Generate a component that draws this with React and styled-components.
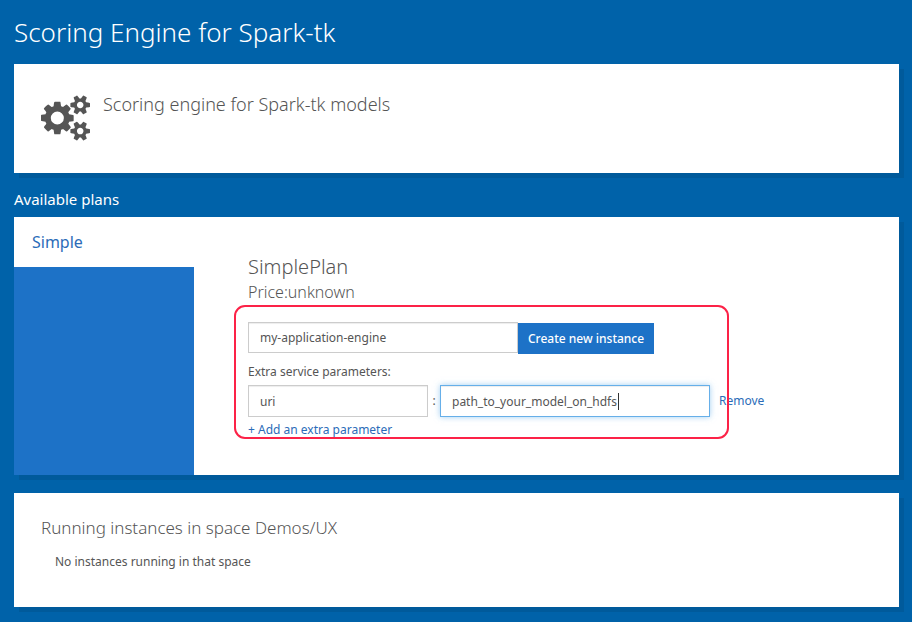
import React, { useState } from 'react';
import styled, { createGlobalStyle } from 'styled-components';

const GlobalStyle = createGlobalStyle`
  *, *::before, *::after { box-sizing: border-box; }
  body {
    margin: 0;
    background: #0062a9;
    color: #555;
    font: 12px/20px "Noto Sans", "Open Sans", sans-serif;
  }
`;

const Page = styled.main`
  padding: 12px 13px 15px 14px;
`;

const PageTitle = styled.h1`
  margin: 0 0 12px;
  color: #fff;
  font-size: 26px;
  font-weight: 300;
  line-height: 40px;
`;

const SectionTitle = styled.h2`
  margin: 16px 0 7px;
  color: #fff;
  font-size: 15px;
  font-weight: 400;
  line-height: 21px;
`;

const Panel = styled.section`
  background: #fff;
  box-shadow: 5px 5px 0 rgba(0, 0, 0, 0.08);
`;

const Summary = styled(Panel)`
  display: flex;
  align-items: flex-start;
  gap: 13px;
  min-height: 109px;
  padding: 28px 27px;
`;

const SummaryText = styled.p`
  margin: 0;
  font-size: 18px;
  font-weight: 300;
  line-height: 24px;
`;

const GearsIcon = styled.svg`
  width: 49px;
  height: 46px;
  margin-top: 3px;
  fill: #555;
`;

const Plans = styled(Panel)`
  display: grid;
  grid-template-columns: 180px 1fr;
  min-height: 258px;
`;

const PlanTabs = styled.nav`
  background: #1d72c7;
`;

const PlanTab = styled.a`
  display: block;
  padding: 14px 18px;
  background: #fff;
  color: #2b6cb8;
  font-size: 16px;
  line-height: 22px;
  text-decoration: none;
`;

const PlanDetails = styled.div`
  padding: 37px 54px 34px;
`;

const PlanName = styled.h3`
  margin: 0;
  font-size: 20px;
  font-weight: 300;
  line-height: 26px;
`;

const PlanPrice = styled.p`
  margin: 1px 0 19px;
  font-size: 16px;
  font-weight: 300;
  line-height: 22px;
`;

const InstanceForm = styled.form`
  position: relative;
`;

const Highlight = styled.span`
  position: absolute;
  top: -17px;
  left: -14px;
  width: 495px;
  height: 134px;
  border: 2px solid #fc2247;
  border-radius: 11px;
  pointer-events: none;
`;

const NameRow = styled.div`
  display: flex;
  align-items: flex-start;
`;

const TextField = styled.input`
  display: block;
  width: ${({ $wide }) => ($wide ? '270px' : '180px')};
  height: ${({ $tall }) => ($tall ? '32px' : '31px')};
  padding: 0 11px;
  border: 1px solid ${({ $active }) => ($active ? '#66afe9' : '#ccc')};
  border-radius: 0;
  outline: none;
  background: #fff;
  box-shadow: inset 0 1px 1px rgba(0, 0, 0, 0.075)
    ${({ $active }) => $active && ', 0 0 6px rgba(102, 175, 233, 0.6)'};
  color: #555;
  font: inherit;
`;

const CreateButton = styled.button`
  height: 31px;
  margin-top: 1px;
  padding: 0 10px;
  border: 0;
  background: #1d72c7;
  color: #fff;
  font: inherit;
  font-weight: 500;
`;

const ParamsLabel = styled.p`
  margin: 8px 0 3px;
`;

const ParamRow = styled.div`
  display: flex;
  align-items: center;
`;

const Separator = styled.span`
  width: 12px;
  text-align: center;
`;

const ValueBox = styled.div`
  position: relative;
  margin-right: 9px;
`;

const Caret = styled.span`
  position: absolute;
  top: 8px;
  left: 178px;
  width: 1px;
  height: 17px;
  background: #333;
`;

const ActionLink = styled.a`
  color: #2b6cb8;
  text-decoration: none;
`;

const AddRow = styled.div`
  margin-top: 3px;
`;

const Instances = styled(Panel)`
  min-height: 114px;
  margin-top: 18px;
  padding: 23px 27px;
`;

const InstancesTitle = styled.h2`
  margin: 0 0 12px;
  font-size: 17px;
  font-weight: 300;
  line-height: 24px;
`;

const EmptyMessage = styled.p`
  margin: 0;
  padding-left: 14px;
`;

const bigGear =
  'M896 896q0-106-75-181t-181-75-181 75-75 181 75 181 181 75 181-75 75-181zm384-91v185q0 10-7 19.5t-16 10.5l-155 24q-11 35-32 76 34 48 90 115 7 11 7 20 0 12-7 19-23 30-82.5 89.5t-78.5 59.5q-11 0-21-7l-115-90q-37 19-77 31-11 108-23 155-7 24-30 24h-186q-11 0-20-7.5t-10-17.5l-23-153q-34-10-75-31l-118 89q-7 7-20 7-11 0-21-8-144-133-144-160 0-9 7-19 10-14 41-53t47-61q-23-44-35-82l-152-24q-10-1-17-9.5t-7-19.5v-185q0-10 7-19.5t16-10.5l155-24q11-35 32-76-34-48-90-115-7-11-7-20 0-12 7-20 22-30 82-89t79-59q11 0 21 7l115 90q34-18 77-32 11-108 23-154 7-24 30-24h186q11 0 20 7.5t10 17.5l23 153q34 10 75 31l118-89q8-7 20-7 11 0 21 8 144 133 144 160 0 8-7 19-12 16-42 54t-45 60q23 48 34 82l152 23q10 2 17 10.5t7 19.5z';
const smallGear =
  'M1664 384q0-52-38-90t-90-38-90 38-38 90q0 53 37.5 90.5t90.5 37.5 90.5-37.5 37.5-90.5zm256-70v140q0 16-149 31-12 27-30 52 51 113 51 138 0 4-4 7-122 71-124 71-8 0-46-47t-52-68q-20 2-30 2t-30-2q-14 21-52 68t-46 47q-2 0-124-71-4-3-4-7 0-25 51-138-18-25-30-52-149-15-149-31v-140q0-16 149-31 13-29 30-52-51-113-51-138 0-4 4-7 4-2 35-20t59-34 30-16q8 0 46 46.5t52 67.5q20-2 30-2t30 2q51-71 92-112l6-2q4 0 124 70 4 3 4 7 0 25-51 138 17 23 30 52 149 15 149 31z';

function Gears() {
  return (
    <GearsIcon viewBox="0 0 1920 1792" aria-hidden="true">
      <path fillRule="evenodd" d={bigGear} />
      <path fillRule="evenodd" d={smallGear} />
      <path fillRule="evenodd" d={smallGear} transform="translate(0 1024)" />
    </GearsIcon>
  );
}

export default function App() {
  const [name, setName] = useState('my-application-engine');
  const [paramKey, setParamKey] = useState('uri');
  const [paramValue, setParamValue] = useState('path_to_your_model_on_hdfs');

  return (
    <>
      <GlobalStyle />
      <Page>
        <PageTitle>Scoring Engine for Spark-tk</PageTitle>
        <Summary>
          <Gears />
          <SummaryText>Scoring engine for Spark-tk models</SummaryText>
        </Summary>

        <SectionTitle>Available plans</SectionTitle>
        <Plans>
          <PlanTabs>
            <PlanTab href="#simple">Simple</PlanTab>
          </PlanTabs>
          <PlanDetails>
            <PlanName>SimplePlan</PlanName>
            <PlanPrice>Price:unknown</PlanPrice>
            <InstanceForm onSubmit={(e) => e.preventDefault()}>
              <NameRow>
                <TextField
                  $wide
                  aria-label="Instance name"
                  value={name}
                  onChange={(e) => setName(e.target.value)}
                />
                <CreateButton type="submit">Create new instance</CreateButton>
              </NameRow>
              <ParamsLabel>Extra service parameters:</ParamsLabel>
              <ParamRow>
                <TextField
                  $tall
                  aria-label="Parameter name"
                  value={paramKey}
                  onChange={(e) => setParamKey(e.target.value)}
                />
                <Separator>:</Separator>
                <ValueBox>
                  <TextField
                    $wide
                    $tall
                    $active
                    aria-label="Parameter value"
                    value={paramValue}
                    onChange={(e) => setParamValue(e.target.value)}
                  />
                  <Caret />
                </ValueBox>
                <ActionLink href="#remove">Remove</ActionLink>
              </ParamRow>
              <AddRow>
                <ActionLink href="#add">+ Add an extra parameter</ActionLink>
              </AddRow>
              <Highlight />
            </InstanceForm>
          </PlanDetails>
        </Plans>

        <Instances>
          <InstancesTitle>Running instances in space Demos/UX</InstancesTitle>
          <EmptyMessage>No instances running in that space</EmptyMessage>
        </Instances>
      </Page>
    </>
  );
}
